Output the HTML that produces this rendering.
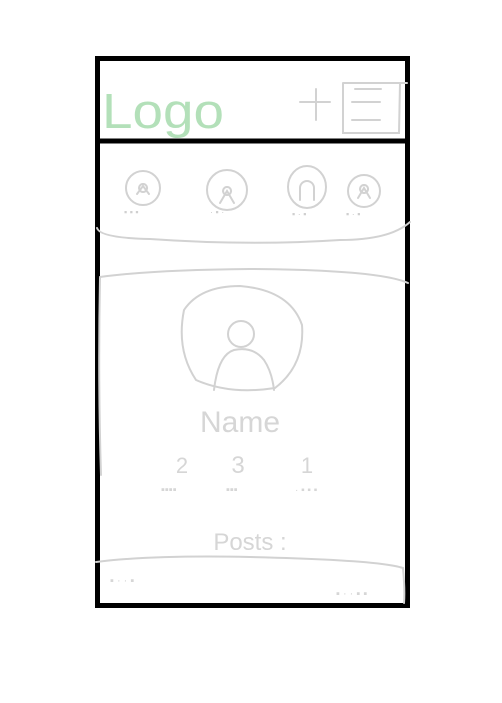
<!DOCTYPE html>
<html><head><meta charset="utf-8"><style>
html,body{margin:0;padding:0;background:#fff;width:502px;height:703px;overflow:hidden}
svg{display:block}
text{font-family:"Liberation Sans",sans-serif}
</style></head><body>
<svg width="502" height="703" viewBox="0 0 502 703" xmlns="http://www.w3.org/2000/svg">
<g fill="none" stroke="#000">
<rect x="97.5" y="58.5" width="310" height="547" stroke-width="5"/>
<line x1="96" y1="141" x2="410" y2="141" stroke-width="5"/>
</g>
<text x="102" y="128" font-size="49" fill="#b3e0b9" textLength="122" lengthAdjust="spacingAndGlyphs">Logo</text>
<g stroke="#d2d2d2" stroke-width="2" fill="none" stroke-linecap="round">
<path d="M300 102 H330 M316 89 V120"/>
<path d="M343 83 H407 M343 83 V133 H399 L400 83"/>
<path d="M355 89 H381 M352 102 H380 M352 120 H380"/>
<circle cx="143" cy="188" r="17"/>
<circle cx="227" cy="190" r="20"/>
<ellipse cx="307" cy="187" rx="19" ry="21"/>
<circle cx="364" cy="191" r="16"/>
<path d="M137 194 l6-8 6 8 M143 184 a4 4 0 1 0 0.1 0"/>
<path d="M220 203 l7-12 7 12 M227 187 a4 4 0 1 0 0.1 0"/>
<path d="M300 200 v-12 a7 7 0 0 1 14 0 v12"/>
<path d="M358 198 l6-10 6 10 M364 185 a4 4 0 1 0 0.1 0"/>
<path d="M97 228 Q100 238 150 239 Q250 246 340 240 Q390 240 410 222"/>
<path d="M100 277 Q150 270 250 269 Q380 270 408 283"/>
<path d="M100 278 Q98 380 101 475"/>
<path d="M240 286 Q200 286 184 310 Q176 350 196 380 Q230 395 275 388 Q305 365 302 325 Q290 290 240 286 Z"/>
<circle cx="241" cy="334" r="13"/>
<path d="M214 390 Q218 355 234 350 Q253 346 264 360 Q272 372 274 390"/>
<path d="M96 562 Q150 555 250 557 Q380 560 403 568 Q405 590 404 603"/>
</g>
<g fill="#cfcfcf" font-size="9">
<text x="124" y="215">▪ ▪ ▪</text><text x="210" y="215">· ▪ ·</text><text x="292" y="217">▪ · ▪</text><text x="346" y="217">▪ · ▪</text>
</g>
<g fill="#d6d6d6">
<text x="240" y="432" font-size="30" text-anchor="middle">Name</text>
<text x="182" y="473" font-size="22" text-anchor="middle">2</text>
<text x="238" y="473" font-size="24" text-anchor="middle">3</text>
<text x="307" y="473" font-size="22" text-anchor="middle">1</text>
<text x="161" y="493" font-size="11">▪▪▪▪</text>
<text x="226" y="493" font-size="11">▪▪▪</text>
<text x="295" y="493" font-size="10">· ▪ ▪ ▪</text>
<text x="250" y="550" font-size="24" text-anchor="middle">Posts :</text>
<text x="110" y="584" font-size="11">▪ · · ▪</text>
<text x="336" y="597" font-size="11">▪ · · ▪ ▪</text>
</g>
</svg>
</body></html>
